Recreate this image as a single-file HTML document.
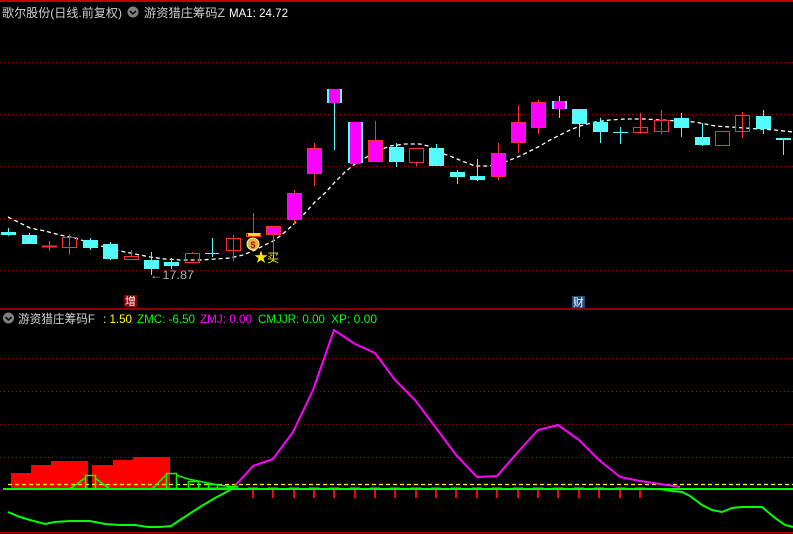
<!DOCTYPE html>
<html><head><meta charset="utf-8"><style>
html,body{margin:0;padding:0;background:#000;width:793px;height:534px;overflow:hidden}
svg{display:block}
text{font-family:"Liberation Sans","Noto Sans CJK SC",sans-serif}
</style></head><body>
<svg width="793" height="534" viewBox="0 0 793 534" xmlns="http://www.w3.org/2000/svg">
<rect width="793" height="534" fill="#000"/>
<line x1="0" y1="1" x2="793" y2="1" stroke="#c00000" stroke-width="2"/>
<line x1="23" y1="0" x2="23" y2="3" stroke="#c00000"/>
<!-- grid -->
<g stroke="#900000" stroke-width="1" stroke-dasharray="1,3">
<line x1="0" y1="62.5" x2="793" y2="62.5"/>
<line x1="0" y1="114.5" x2="793" y2="114.5"/>
<line x1="0" y1="166.5" x2="793" y2="166.5"/>
<line x1="0" y1="218.5" x2="793" y2="218.5"/>
<line x1="0" y1="270.5" x2="793" y2="270.5"/>
<line x1="0" y1="358.5" x2="793" y2="358.5"/>
<line x1="0" y1="391.5" x2="793" y2="391.5"/>
<line x1="0" y1="424.5" x2="793" y2="424.5"/>
<line x1="0" y1="457.5" x2="793" y2="457.5"/>
</g>
<line x1="0" y1="309" x2="793" y2="309" stroke="#c00000" stroke-width="1.5"/>
<line x1="0" y1="532.5" x2="793" y2="532.5" stroke="#c00000" stroke-width="1"/>

<!-- header -->
<text x="2" y="17" font-size="12" fill="#d0d0d0" textLength="120" lengthAdjust="spacingAndGlyphs">歌尔股份(日线.前复权)</text>
<circle cx="133" cy="12" r="5.5" fill="#808080"/>
<path d="M130 11 l3 3 l3 -3" stroke="#000" stroke-width="1.5" fill="none"/>
<text x="144" y="17" font-size="12" fill="#d0d0d0" textLength="81" lengthAdjust="spacingAndGlyphs">游资猎庄筹码Z</text>
<text x="229" y="17" font-size="12" fill="#fff" textLength="59" lengthAdjust="spacingAndGlyphs">MA1: 24.72</text>

<!-- MA dashed -->
<polyline fill="none" stroke="#fff" stroke-width="1.3" stroke-dasharray="4,3" points="8,217 20,223 30,228 45,231 60,235 75,238 90,243 105,247 120,251 135,254 150,257 165,259 180,260 200,260 215,259 230,258 243,255 255,250 265,245 275,240 285,232 295,223 305,213 315,202 325,193 335,182 345,172 355,164 365,158 375,152 390,146 405,144 420,144 428,146 438,152 450,156 462,161 475,166 488,166 500,164 510,160 520,156 530,151 540,146 550,140 560,135 570,130 580,126 595,122 610,120 625,119 645,119 660,120 680,121 695,122 705,124 715,126 730,127 745,128 760,129 775,130 793,132"/>

<!-- candles -->
<g stroke-width="1">
<g stroke="#54fcfc">
<line x1="8.5" y1="228" x2="8.5" y2="236"/>
<line x1="29.5" y1="233" x2="29.5" y2="244"/>
<line x1="90.5" y1="238" x2="90.5" y2="250"/>
<line x1="110.5" y1="242" x2="110.5" y2="260"/>
<line x1="151.5" y1="252" x2="151.5" y2="275"/>
<line x1="171.5" y1="258" x2="171.5" y2="269"/>
<line x1="212.5" y1="238" x2="212.5" y2="257"/>
<line x1="205" y1="253.5" x2="219" y2="253.5"/>
<line x1="334.5" y1="100" x2="334.5" y2="150"/>
<line x1="396.5" y1="143" x2="396.5" y2="167"/>
<line x1="436.5" y1="144" x2="436.5" y2="166"/>
<line x1="457.5" y1="170" x2="457.5" y2="184"/>
<line x1="477.5" y1="159" x2="477.5" y2="181"/>
<line x1="559.5" y1="96" x2="559.5" y2="118"/>
<line x1="579.5" y1="109" x2="579.5" y2="137"/>
<line x1="600.5" y1="118" x2="600.5" y2="143"/>
<line x1="620.5" y1="127" x2="620.5" y2="144"/>
<line x1="613" y1="132.5" x2="628" y2="132.5"/>
<line x1="681.5" y1="113" x2="681.5" y2="137"/>
<line x1="702.5" y1="123" x2="702.5" y2="146"/>
<line x1="763.5" y1="110" x2="763.5" y2="134"/>
<line x1="783.5" y1="138" x2="783.5" y2="155"/>
</g>
<g fill="#54fcfc">
<rect x="1" y="232" width="15" height="3"/>
<rect x="22" y="235" width="15" height="9"/>
<rect x="83" y="240" width="15" height="8"/>
<rect x="103" y="244" width="15" height="15"/>
<rect x="144" y="260" width="15" height="9"/>
<rect x="164" y="262" width="15" height="4"/>
<rect x="327" y="89" width="15" height="14"/>
<rect x="348" y="122" width="15" height="41"/>
<rect x="389" y="147" width="15" height="15"/>
<rect x="429" y="148" width="15" height="18"/>
<rect x="450" y="172" width="15" height="5"/>
<rect x="470" y="176" width="15" height="4"/>
<rect x="552" y="101" width="15" height="8"/>
<rect x="572" y="109" width="15" height="15"/>
<rect x="593" y="122" width="15" height="10"/>
<rect x="674" y="118" width="15" height="10"/>
<rect x="695" y="137" width="15" height="8"/>
<rect x="756" y="116" width="15" height="13"/>
<rect x="776" y="138" width="15" height="2"/>
</g>
<g stroke="#ff3232">
<line x1="42" y1="246.5" x2="57" y2="246.5" stroke-width="2"/>
<line x1="49.5" y1="241" x2="49.5" y2="251"/>
<line x1="69.5" y1="234" x2="69.5" y2="255"/>
<line x1="131.5" y1="250" x2="131.5" y2="256"/>
<line x1="192.5" y1="252" x2="192.5" y2="254"/>
<line x1="233.5" y1="235" x2="233.5" y2="261"/>
<line x1="253.5" y1="213" x2="253.5" y2="233"/>
<line x1="273.5" y1="235" x2="273.5" y2="262"/>
<line x1="294.5" y1="190" x2="294.5" y2="224"/>
<line x1="314.5" y1="143" x2="314.5" y2="186"/>
<line x1="375.5" y1="121" x2="375.5" y2="140"/>
<line x1="416.5" y1="163" x2="416.5" y2="166"/>
<line x1="498.5" y1="143" x2="498.5" y2="180"/>
<line x1="518.5" y1="105" x2="518.5" y2="153"/>
<line x1="538.5" y1="100" x2="538.5" y2="134"/>
<line x1="640.5" y1="113" x2="640.5" y2="134"/>
<line x1="661.5" y1="110" x2="661.5" y2="134"/>
<line x1="742.5" y1="112" x2="742.5" y2="138"/>
</g>
<g fill="none" stroke="#ff3232">
<rect x="62.5" y="237.5" width="14" height="10"/>
<rect x="124.5" y="256.5" width="14" height="3"/>
<rect x="185.5" y="253.5" width="14" height="9"/>
<rect x="226.5" y="238.5" width="14" height="12"/>
<rect x="246.5" y="233.5" width="14" height="3"/>
<rect x="409.5" y="148.5" width="14" height="14"/>
<rect x="633.5" y="127.5" width="14" height="5"/>
<rect x="654.5" y="120.5" width="14" height="11"/>
<rect x="715.5" y="131.5" width="14" height="14"/>
<rect x="735.5" y="115.5" width="14" height="16"/>
</g>
<g fill="#ff00ff" stroke="#ff3232">
<rect x="266.5" y="226.5" width="14" height="8"/>
<rect x="287.5" y="193.5" width="14" height="26"/>
<rect x="307.5" y="148.5" width="14" height="25"/>
<rect x="368.5" y="140.5" width="14" height="21"/>
<rect x="491.5" y="153.5" width="14" height="23"/>
<rect x="511.5" y="122.5" width="14" height="20"/>
<rect x="531.5" y="102.5" width="14" height="25"/>
</g>
<g fill="#ff00ff">
<rect x="329" y="89" width="11" height="14"/>
<rect x="350" y="122" width="11" height="42"/>
<rect x="554" y="101" width="11" height="8"/>
</g>
</g>
<rect x="248" y="233" width="12" height="3" fill="#ffe000"/>
<ellipse cx="253" cy="244" rx="6" ry="6" fill="#e8b040" stroke="#fff0a0" stroke-width="1"/>
<text x="253" y="248" font-size="9" fill="#a02000" text-anchor="middle" font-weight="bold">$</text>
<text x="261" y="262" font-size="14" fill="#ffe800" text-anchor="middle">★</text>
<text x="267" y="262" font-size="12" fill="#ffe800">买</text>
<text x="150" y="279" font-size="12" fill="#b0b0b0" textLength="44" lengthAdjust="spacingAndGlyphs">←17.87</text>

<rect x="124" y="295" width="13" height="12" fill="#8b0000"/>
<text x="130.5" y="305" font-size="11" fill="#fff" text-anchor="middle">增</text>
<rect x="572" y="296" width="13" height="12" fill="#1a4a7a"/>
<text x="578.5" y="306" font-size="11" fill="#fff" text-anchor="middle">财</text>

<!-- lower header -->
<circle cx="8.5" cy="318" r="5.5" fill="#808080"/>
<path d="M5.5 317 l3 3 l3 -3" stroke="#000" stroke-width="1.5" fill="none"/>
<text x="18" y="323" font-size="12" fill="#d0d0d0" textLength="77" lengthAdjust="spacingAndGlyphs">游资猎庄筹码F</text>
<text x="103" y="323" font-size="12" fill="#ffff00" textLength="29" lengthAdjust="spacingAndGlyphs">: 1.50</text>
<text x="137" y="323" font-size="12" fill="#00ff00" textLength="58" lengthAdjust="spacingAndGlyphs">ZMC: -6.50</text>
<text x="200" y="323" font-size="12" fill="#ff00ff" textLength="52" lengthAdjust="spacingAndGlyphs">ZMJ: 0.00</text>
<text x="258" y="323" font-size="12" fill="#00ff00" textLength="67" lengthAdjust="spacingAndGlyphs">CMJJR: 0.00</text>
<text x="331" y="323" font-size="12" fill="#00ff00" textLength="46" lengthAdjust="spacingAndGlyphs">XP: 0.00</text>

<!-- red bars -->
<g fill="#ff0000">
<rect x="11" y="473" width="20" height="16"/>
<rect x="31" y="465" width="20" height="24"/>
<rect x="51" y="461" width="37" height="28"/>
<rect x="92" y="465" width="21" height="24"/>
<rect x="113" y="460" width="20" height="29"/>
<rect x="133" y="457" width="37" height="32"/>
</g>
<line x1="8" y1="484.5" x2="793" y2="484.5" stroke="#ffff00" stroke-width="1.3" stroke-dasharray="4,3"/>
<polyline fill="none" stroke="#ff00ff" stroke-width="2" points="177,489 233,488 253,466 273,459 293,432 313,390 334,330 355,344 375,353 395,380 415,400 436,428 456,455 477,477 497,476 518,452 538,430 558,425 579,440 599,460 620,477 640,481 660,484 680,487"/>
<g fill="#ff0000">
<path d="M248 487h10v3h-4v8h-2v-8h-4z"/><path d="M268 487h10v3h-4v8h-2v-8h-4z"/><path d="M289 487h10v3h-4v8h-2v-8h-4z"/><path d="M309 487h10v3h-4v8h-2v-8h-4z"/><path d="M329 487h10v3h-4v8h-2v-8h-4z"/><path d="M350 487h10v3h-4v8h-2v-8h-4z"/><path d="M370 487h10v3h-4v8h-2v-8h-4z"/><path d="M390 487h10v3h-4v8h-2v-8h-4z"/><path d="M411 487h10v3h-4v8h-2v-8h-4z"/><path d="M431 487h10v3h-4v8h-2v-8h-4z"/><path d="M451 487h10v3h-4v8h-2v-8h-4z"/><path d="M472 487h10v3h-4v8h-2v-8h-4z"/><path d="M492 487h10v3h-4v8h-2v-8h-4z"/><path d="M513 487h10v3h-4v8h-2v-8h-4z"/><path d="M533 487h10v3h-4v8h-2v-8h-4z"/><path d="M553 487h10v3h-4v8h-2v-8h-4z"/><path d="M574 487h10v3h-4v8h-2v-8h-4z"/><path d="M594 487h10v3h-4v8h-2v-8h-4z"/><path d="M615 487h10v3h-4v8h-2v-8h-4z"/><path d="M635 487h10v3h-4v8h-2v-8h-4z"/>
</g>
<line x1="3" y1="489" x2="793" y2="489" stroke="#00ff00" stroke-width="2"/>
<g fill="none" stroke="#00ff00" stroke-width="1.5">
<polyline points="70,489 85,478"/><polyline points="95,478 110,489"/>
<rect x="85.5" y="475.5" width="10" height="13"/>
<polyline points="152,489 166,475"/>
<rect x="166.5" y="473.5" width="10" height="15"/>
<polyline points="176,475 188,479 198,481 208,483 218,485 235,487"/>
<rect x="188.5" y="481.5" width="10" height="7"/>
<rect x="208.5" y="484.5" width="9" height="4"/>
<rect x="228.5" y="486.5" width="9" height="2"/>
</g>
<polyline fill="none" stroke="#00ff00" stroke-width="2" points="8,512 20,517 30,520 45,524 55,522 70,521 90,521 105,524 120,525 135,525 148,527 160,527 171,526 180,520 200,507 215,498 232,489 660,489 672,491 682,492 690,496 702,505 712,510 722,512 732,508 742,507 762,507 775,518 785,525 793,527"/>
</svg>
</body></html>
